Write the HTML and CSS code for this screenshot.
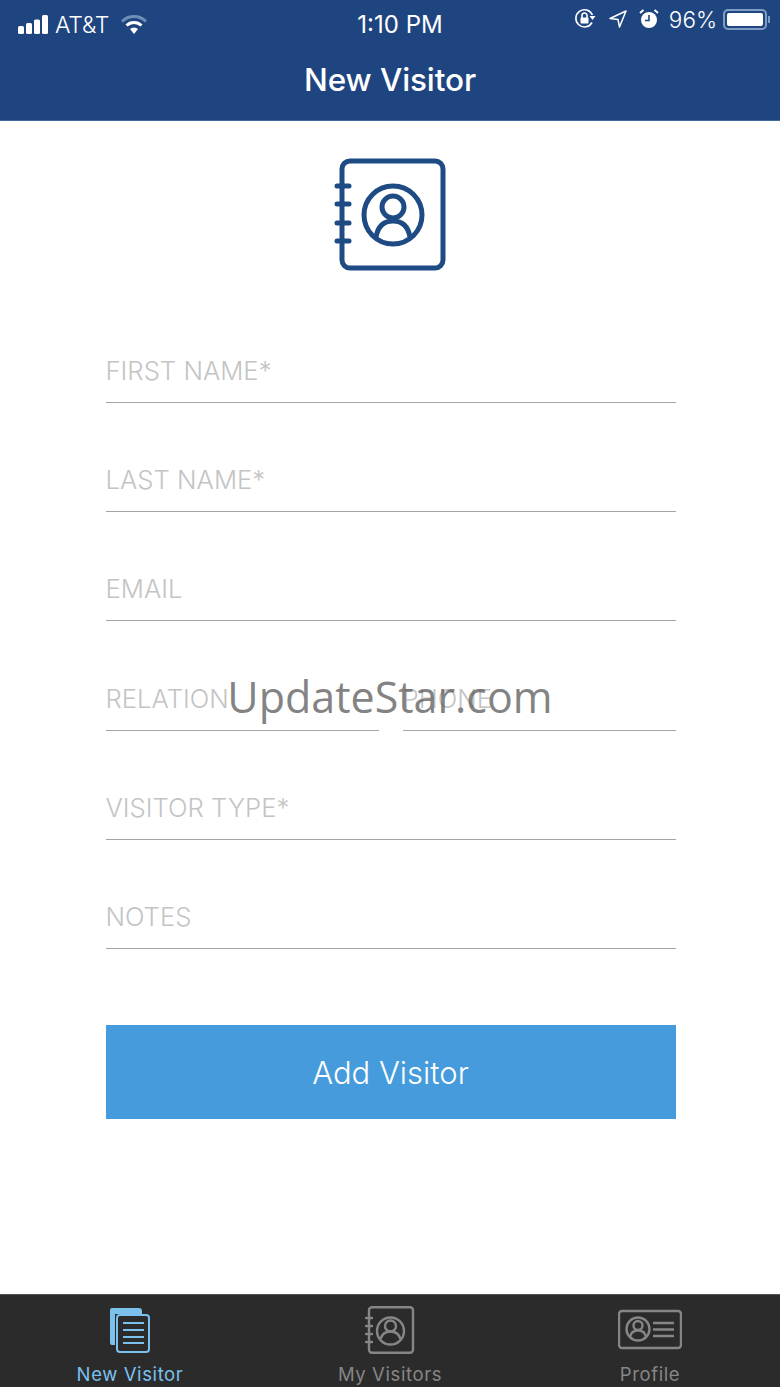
FILE: index.html
```html
<!DOCTYPE html>
<html lang="en">
<head>
    <meta charset="UTF-8">
    <meta name="viewport" content="width=device-width, initial-scale=1.0">
    <title>New Visitor</title>
    <link rel="stylesheet" href="styles.css">
</head>
<body>
    <div class="screen">
        <header class="header">
            <div class="status">
                <div class="status-left">
                    <svg class="signal" width="31" height="20" viewBox="0 0 31 20">
                        <rect x="0" y="11" width="6" height="8" rx="1.5"/>
                        <rect x="8" y="8" width="6" height="11" rx="1.5"/>
                        <rect x="16" y="4.500" width="6" height="14.500" rx="1.5"/>
                        <rect x="24" y="0" width="6" height="19" rx="1.5"/>
                    </svg>
                    <span class="carrier">AT&amp;T</span>
                    <svg class="wifi" width="26" height="20" viewBox="0 0 26 20">
                        <path d="M1 6.5 A17 17 0 0 1 25 6.5" fill="none" stroke="#6f8fb8" stroke-width="3"/>
                        <path d="M5.5 10.5 A11 11 0 0 1 20.5 10.5" fill="none" stroke="#fff" stroke-width="3"/>
                        <path d="M9 14 L13 19 L17 14 A6 6 0 0 0 9 14 Z" fill="#fff"/>
                    </svg>
                </div>
                <div class="status-time">1:10 PM</div>
                <div class="status-right">
                    <svg width="22" height="22" viewBox="0 0 22 22" fill="none" stroke="#fff" stroke-width="1.6">
                        <path d="M18 14.5 A8.6 8.6 0 1 1 18.4 7"/>
                        <path d="M15.5 8 L21.5 8 L18.5 12 Z" fill="#fff" stroke="none"/>
                        <rect x="6.5" y="9.5" width="8" height="6" rx="1" fill="#fff" stroke="none"/>
                        <path d="M8 10 V7.5 A2.5 2.5 0 0 1 13 7.5 V10"/>
                    </svg>
                    <svg class="arrow" width="18" height="18" viewBox="0 0 18 18" fill="none" stroke="#fff" stroke-width="1.5" stroke-linejoin="round">
                        <path d="M17 1 L1 8.5 L9 9.5 L10.5 17 Z"/>
                    </svg>
                    <svg class="alarm" width="20" height="20" viewBox="0 0 20 20">
                        <circle cx="10" cy="11" r="8" fill="#fff"/>
                        <path d="M10 6 V11.5 H6" fill="none" stroke="#1f4580" stroke-width="1.6"/>
                        <path d="M1 4 L4.5 1 M19 4 L15.5 1" stroke="#fff" stroke-width="2"/>
                    </svg>
                    <span class="battery-pct">96%</span>
                    <div class="battery"><div class="battery-fill"></div></div>
                    <div class="battery-tip"></div>
                </div>
            </div>
            <h1 class="title">New Visitor</h1>
        </header>

        <main class="main">
            <svg class="book-icon" width="114" height="114" viewBox="0 0 114 114" fill="none" stroke="#1f4b85" stroke-width="5">
                <rect x="8" y="3" width="101" height="107" rx="8"/>
                <path d="M3 28 H15 M3 46 H15 M3 65 H15 M3 83 H15" stroke-linecap="round"/>
                <circle cx="59" cy="57" r="29"/>
                <circle cx="59" cy="49" r="11"/>
                <path d="M42 79 C44 68 50 63 59 63 C68 63 74 68 76 79"/>
            </svg>

            <form class="form">
                <div class="field">FIRST NAME*</div>
                <div class="field">LAST NAME*</div>
                <div class="field">EMAIL</div>
                <div class="field-row">
                    <div class="field">RELATION</div>
                    <div class="field">PHONE</div>
                </div>
                <div class="field">VISITOR TYPE*</div>
                <div class="field">NOTES</div>
                <button class="add-btn" type="button">Add Visitor</button>
            </form>
        </main>

        <nav class="tabs">
            <div class="tab tab-active">
                <svg width="44" height="48" viewBox="-1 0 44 48" fill="none" stroke="#7cc0ee" stroke-width="2">
                    <path d="M6 39 H3 Q1 39 1 37 V4 Q1 2 3 2 H30 Q33 2 33 5 V8 H6 Z" stroke="none" fill="#7cc0ee"/>
                    <rect x="8" y="9" width="32" height="37" rx="3" fill="#2b2b2b"/>
                    <path d="M14 17 H35 M14 24 H35 M14 31 H35 M14 37 H35"/>
                </svg>
                <span class="tab-label">New Visitor</span>
            </div>
            <div class="tab">
                <svg width="50" height="48" viewBox="0 0 50 48" fill="none" stroke="#868686" stroke-width="2.400">
                    <rect x="4" y="1.200" width="44" height="45.600" rx="3"/>
                    <path d="M1 12 H7 M1 20 H7 M1 28 H7 M1 36 H7" stroke-linecap="round"/>
                    <circle cx="25.500" cy="25" r="13.500"/>
                    <circle cx="25.500" cy="20" r="5.500"/>
                    <path d="M15.500 33 C17 28 21 25.500 25.500 25.500 C30 25.500 34 28 35.500 33"/>
                </svg>
                <span class="tab-label">My Visitors</span>
            </div>
            <div class="tab">
                <svg width="64" height="48" viewBox="0 0 64 48" fill="none" stroke="#868686" stroke-width="2.400">
                    <rect x="1" y="5" width="62" height="37" rx="3"/>
                    <circle cx="20" cy="23" r="11.500"/>
                    <circle cx="20" cy="19.500" r="4.500"/>
                    <path d="M12 31 C13 26 17 24.500 20 24.500 C23 24.500 27 26 28 31"/>
                    <path d="M35 17 H56 M35 23.500 H56 M35 30 H56"/>
                </svg>
                <span class="tab-label">Profile</span>
            </div>
        </nav>

        <div class="watermark">UpdateStar.com</div>
    </div>
</body>
</html>
```

FILE: styles.css
```css
html, body {
    margin: 0;
    padding: 0;
    background-color: #fff;
}
.screen {
    position: relative;
    width: 780px;
    height: 1387px;
    overflow: hidden;
    display: flex;
    flex-direction: column;
    font-family: Inter, "Liberation Sans", sans-serif;
}

/* top bar */
.header {
    height: 121px;
    flex-shrink: 0;
    box-sizing: border-box;
    background-color: #1f4580;
    border-bottom: 1px solid #3f6a9a;
    color: #fff;
}
.status {
    position: relative;
    height: 49px;
}
.status-left {
    display: flex;
    align-items: center;
    padding: 14px 0 0 18px;
    height: 22px;
}
.signal {
    fill: #fff;
}
.carrier {
    margin-left: 6px;
    font-size: 23px;
    font-weight: 300;
    letter-spacing: -0.2px;
}
.wifi {
    margin-left: 12px;
}
.status-time {
    position: absolute;
    left: 0;
    right: 0;
    top: 10px;
    padding-left: 20px;
    text-align: center;
    font-size: 24px;
    line-height: 29px;
    font-weight: 400;
}
.status-right {
    position: absolute;
    right: 10px;
    top: 8px;
    display: flex;
    align-items: center;
    height: 22px;
}
.arrow {
    margin-left: 13px;
}
.alarm {
    margin-left: 12px;
}
.battery-pct {
    margin-left: 10px;
    font-size: 22.500px;
    font-weight: 300;
}
.battery {
    margin-left: 6px;
    width: 44px;
    height: 21px;
    box-sizing: border-box;
    border: 2px solid #7f9cc4;
    border-radius: 5px;
    padding: 2px;
}
.battery-fill {
    height: 100%;
    background-color: #fff;
    border-radius: 2px;
}
.battery-tip {
    width: 2px;
    height: 7px;
    margin-left: 1px;
    background-color: #7f9cc4;
}
.title {
    margin: 13px 0 0;
    text-align: center;
    font-size: 31.500px;
    line-height: 36px;
    font-weight: 500;
    letter-spacing: -0.1px;
}

/* form */
.main {
    flex: 1;
    display: flex;
    flex-direction: column;
    align-items: center;
}
.book-icon {
    margin-top: 37px;
    margin-left: 1px;
}
.form {
    width: 570px;
    margin: 22px 0 0 1px;
    display: flex;
    flex-direction: column;
}
.field {
    height: 109.200px;
    box-sizing: border-box;
    padding-bottom: 15px;
    display: flex;
    align-items: flex-end;
    flex-shrink: 0;
    border-bottom: 1px solid #a4a4a4;
    font-size: 25.700px;
    line-height: 32px;
    font-weight: 300;
    color: #c4c4c4;
}
.form > .field:first-child {
    height: 109px;
}
.field-row {
    display: flex;
    gap: 24px;
}
.field-row .field {
    flex: 1;
}
.add-btn {
    margin-top: 76px;
    height: 94px;
    padding: 2px 0 0;
    width: 100%;
    border: none;
    background-color: #459bdb;
    color: #fff;
    font-family: inherit;
    font-size: 31px;
    font-weight: 300;
    cursor: pointer;
}

/* bottom tabs */
.tabs {
    height: 93px;
    flex-shrink: 0;
    box-sizing: border-box;
    display: flex;
    background-color: #2b2b2b;
    border-top: 1px solid #555;
}
.tab {
    width: 260px;
    display: flex;
    flex-direction: column;
    align-items: center;
    padding-top: 11px;
    box-sizing: border-box;
}
.tab svg {
    flex-shrink: 0;
}
.tab-label {
    margin-top: 9px;
    font-size: 18.500px;
    line-height: 22px;
    letter-spacing: 0.6px;
    color: #868686;
}
.tab-active .tab-label {
    color: #7cc0ee;
}

/* watermark over the form */
.watermark {
    position: absolute;
    left: 0;
    right: 0;
    top: 667px;
    text-align: center;
    font-family: "Open Sans", sans-serif;
    font-size: 43px;
    line-height: 60px;
    color: #5a5a5a;
    opacity: 0.75;
}
```
